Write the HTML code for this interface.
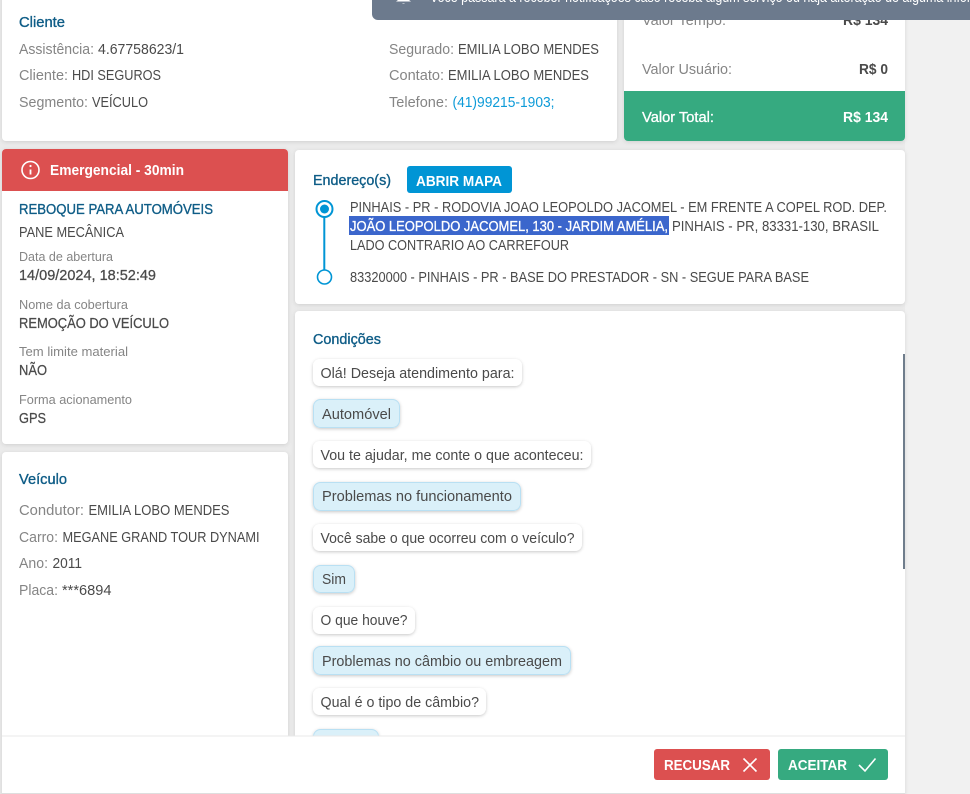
<!DOCTYPE html>
<html lang="pt-BR"><head><meta charset="utf-8"><title>Serviço</title>
<style>
html,body{margin:0;padding:0;width:970px;height:794px;overflow:hidden;background:#f0f0f0}
svg{display:block}
text{font-family:"Liberation Sans",sans-serif;font-size:14.5px;fill:#4a4a4a;white-space:pre}
.l{fill:#858585}
.h{fill:#0f5d87;stroke:#0f5d87;stroke-width:.35}
.s{font-size:13px;fill:#858585}
.m{stroke:#4a4a4a;stroke-width:.25}
.b{font-weight:bold}
.w{fill:#fff}
.wm{fill:#fff;stroke:#fff;stroke-width:.3}
.card{fill:#fff;filter:url(#sh)}
.bub{fill:#fff;filter:url(#sb)}
.sel{fill:#daf0f9;stroke:#b9e0f3;stroke-width:1;filter:url(#sb)}
</style></head><body>
<svg width="970" height="794" viewBox="0 0 970 794" xmlns="http://www.w3.org/2000/svg">
<defs>
<filter id="sh" x="-5%" y="-5%" width="110%" height="110%"><feDropShadow dx="0" dy="1" stdDeviation="2" flood-color="#000" flood-opacity=".12"/></filter>
<filter id="sb" x="-10%" y="-20%" width="120%" height="150%"><feDropShadow dx="0" dy="1" stdDeviation="1.5" flood-color="#000" flood-opacity=".22"/></filter>
</defs>
<rect x="0" y="0" width="905" height="794" fill="#ebebeb"/>
<rect x="905" y="0" width="65" height="794" fill="#f1f1f1"/>

<!-- Cliente -->
<rect class="card" x="2" y="-10" width="615" height="151" rx="4"/>
<text class="h" x="19" y="27" textLength="46" lengthAdjust="spacingAndGlyphs">Cliente</text>
<text class="l" x="19" y="54" textLength="75" lengthAdjust="spacingAndGlyphs">Assistência:</text>
<text x="98" y="54" textLength="86" lengthAdjust="spacingAndGlyphs">4.67758623/1</text>
<text class="l" x="19" y="80" textLength="49" lengthAdjust="spacingAndGlyphs">Cliente:</text>
<text x="72" y="80" textLength="89" lengthAdjust="spacingAndGlyphs">HDI SEGUROS</text>
<text class="l" x="19" y="107" textLength="69" lengthAdjust="spacingAndGlyphs">Segmento:</text>
<text x="92" y="107" textLength="56" lengthAdjust="spacingAndGlyphs">VEÍCULO</text>
<text class="l" x="389" y="54" textLength="65" lengthAdjust="spacingAndGlyphs">Segurado:</text>
<text x="458" y="54" textLength="141" lengthAdjust="spacingAndGlyphs">EMILIA LOBO MENDES</text>
<text class="l" x="389" y="80" textLength="55" lengthAdjust="spacingAndGlyphs">Contato:</text>
<text x="448" y="80" textLength="141" lengthAdjust="spacingAndGlyphs">EMILIA LOBO MENDES</text>
<text class="l" x="389" y="107" textLength="59" lengthAdjust="spacingAndGlyphs">Telefone:</text>
<text x="452.500" y="107" textLength="102" lengthAdjust="spacingAndGlyphs" style="fill:#0e9bd8">(41)99215-1903;</text>

<!-- Valores -->
<rect class="card" x="624" y="-10" width="281" height="151" rx="4"/>
<path d="M624 91H905V137a4 4 0 0 1-4 4H628a4 4 0 0 1-4-4Z" fill="#36aa80"/>
<text class="l" x="642" y="25" textLength="84" lengthAdjust="spacingAndGlyphs">Valor Tempo:</text>
<text class="b" x="843" y="25" textLength="45" lengthAdjust="spacingAndGlyphs">R$ 134</text>
<text class="l" x="642" y="74" textLength="90" lengthAdjust="spacingAndGlyphs">Valor Usuário:</text>
<text class="b" x="859" y="74" textLength="29" lengthAdjust="spacingAndGlyphs">R$ 0</text>
<text class="wm" x="642" y="122" textLength="72" lengthAdjust="spacingAndGlyphs">Valor Total:</text>
<text class="b w" x="843" y="122" textLength="45" lengthAdjust="spacingAndGlyphs">R$ 134</text>

<!-- Banner -->
<path d="M372 0H970V20H378a6 6 0 0 1-6-6Z" fill="#6c7a8d"/>
<path d="M396 1.500H411L409 0H398ZM402 3.500a2 1.500 0 0 0 3 0Z" fill="#fff"/>
<text class="w" x="430" y="2" textLength="541" lengthAdjust="spacingAndGlyphs">Você passará a receber notificações caso receba algum serviço ou haja alteração de alguma infor</text>

<!-- Emergencial -->
<rect class="card" x="2" y="149" width="286" height="295" rx="4"/>
<path d="M2 191V153a4 4 0 0 1 4-4H284a4 4 0 0 1 4 4V191Z" fill="#dc5050"/>
<circle cx="30.500" cy="170" r="8.500" fill="none" stroke="#fff" stroke-width="1.600"/>
<path d="M30.500 169.500V174.500" stroke="#fff" stroke-width="1.800"/>
<circle cx="30.500" cy="166" r="1.100" fill="#fff"/>
<text class="b w" x="50" y="175" textLength="134" lengthAdjust="spacingAndGlyphs">Emergencial - 30min</text>
<text class="h" x="19" y="214" textLength="194" lengthAdjust="spacingAndGlyphs">REBOQUE PARA AUTOMÓVEIS</text>
<text x="19" y="237" textLength="105" lengthAdjust="spacingAndGlyphs">PANE MECÂNICA</text>
<text class="s" x="19" y="261" textLength="94" lengthAdjust="spacingAndGlyphs">Data de abertura</text>
<text class="m" x="19" y="280" textLength="137" lengthAdjust="spacingAndGlyphs">14/09/2024, 18:52:49</text>
<text class="s" x="19" y="309" textLength="109" lengthAdjust="spacingAndGlyphs">Nome da cobertura</text>
<text class="m" x="19" y="328" textLength="150" lengthAdjust="spacingAndGlyphs">REMOÇÃO DO VEÍCULO</text>
<text class="s" x="19" y="356" textLength="109" lengthAdjust="spacingAndGlyphs">Tem limite material</text>
<text class="m" x="19" y="375" textLength="28" lengthAdjust="spacingAndGlyphs">NÃO</text>
<text class="s" x="19" y="404" textLength="113" lengthAdjust="spacingAndGlyphs">Forma acionamento</text>
<text class="m" x="19" y="423" textLength="27" lengthAdjust="spacingAndGlyphs">GPS</text>

<!-- Veículo -->
<rect class="card" x="2" y="452" width="286" height="350" rx="4"/>
<text class="h" x="19" y="484" textLength="48" lengthAdjust="spacingAndGlyphs">Veículo</text>
<text class="l" x="19" y="515" textLength="65" lengthAdjust="spacingAndGlyphs">Condutor:</text>
<text x="88.500" y="515" textLength="141" lengthAdjust="spacingAndGlyphs">EMILIA LOBO MENDES</text>
<text class="l" x="19" y="542" textLength="39" lengthAdjust="spacingAndGlyphs">Carro:</text>
<text x="62.500" y="542" textLength="197" lengthAdjust="spacingAndGlyphs">MEGANE GRAND TOUR DYNAMI</text>
<text class="l" x="19" y="568" textLength="29" lengthAdjust="spacingAndGlyphs">Ano:</text>
<text x="52.500" y="568" textLength="29.500" lengthAdjust="spacingAndGlyphs">2011</text>
<text class="l" x="19" y="595" textLength="39" lengthAdjust="spacingAndGlyphs">Placa:</text>
<text x="62" y="595" textLength="49.500" lengthAdjust="spacingAndGlyphs">***6894</text>

<!-- Endereço -->
<rect class="card" x="295" y="150" width="610" height="154" rx="4"/>
<text class="h" x="313" y="185" textLength="78" lengthAdjust="spacingAndGlyphs">Endereço(s)</text>
<rect x="407" y="166" width="105" height="27" rx="3" fill="#0095d5"/>
<text class="b w" x="416" y="186" textLength="86" lengthAdjust="spacingAndGlyphs">ABRIR MAPA</text>
<path d="M324.300 217V270" stroke="#0095d5" stroke-width="2"/>
<circle cx="324.500" cy="209" r="8" fill="#fff" stroke="#0095d5" stroke-width="2"/>
<circle cx="324.500" cy="209" r="4.500" fill="#0095d5"/>
<circle cx="324.500" cy="277" r="7" fill="#fff" stroke="#0095d5" stroke-width="1.600"/>
<text x="350" y="212" textLength="537" lengthAdjust="spacingAndGlyphs">PINHAIS - PR - RODOVIA JOAO LEOPOLDO JACOMEL - EM FRENTE A COPEL ROD. DEP.</text>
<rect x="349" y="216" width="320" height="19" fill="#3b66cc"/>
<text class="wm" x="350" y="231" textLength="318" lengthAdjust="spacingAndGlyphs">JOÃO LEOPOLDO JACOMEL, 130 - JARDIM AMÉLIA,</text>
<text x="672" y="231" textLength="207" lengthAdjust="spacingAndGlyphs">PINHAIS - PR, 83331-130, BRASIL</text>
<text x="350" y="250" textLength="219" lengthAdjust="spacingAndGlyphs">LADO CONTRARIO AO CARREFOUR</text>
<text x="350" y="282" textLength="459" lengthAdjust="spacingAndGlyphs">83320000 - PINHAIS - PR - BASE DO PRESTADOR - SN - SEGUE PARA BASE</text>

<!-- Condições -->
<rect class="card" x="295" y="311" width="610" height="490" rx="4"/>
<text class="h" x="313" y="344" textLength="68" lengthAdjust="spacingAndGlyphs">Condições</text>

<rect class="bub" x="313" y="359" width="209" height="27" rx="7"/>
<text x="320.500" y="378" textLength="194" lengthAdjust="spacingAndGlyphs">Olá! Deseja atendimento para:</text>
<rect class="sel" x="313.500" y="399.500" width="86" height="28" rx="7"/>
<text x="322" y="419" textLength="69" lengthAdjust="spacingAndGlyphs">Automóvel</text>
<rect class="bub" x="313" y="441" width="278" height="27" rx="7"/>
<text x="320.500" y="460" textLength="263" lengthAdjust="spacingAndGlyphs">Vou te ajudar, me conte o que aconteceu:</text>
<rect class="sel" x="313.500" y="482.500" width="207" height="28" rx="7"/>
<text x="322" y="501" textLength="190" lengthAdjust="spacingAndGlyphs">Problemas no funcionamento</text>
<rect class="bub" x="313" y="524" width="269" height="27" rx="7"/>
<text x="320.500" y="543" textLength="254" lengthAdjust="spacingAndGlyphs">Você sabe o que ocorreu com o veículo?</text>
<rect class="sel" x="313.500" y="565.500" width="41" height="27" rx="7"/>
<text x="322" y="584" textLength="24" lengthAdjust="spacingAndGlyphs">Sim</text>
<rect class="bub" x="313" y="607" width="102" height="27" rx="7"/>
<text x="320.500" y="625" textLength="87" lengthAdjust="spacingAndGlyphs">O que houve?</text>
<rect class="sel" x="313.500" y="646.500" width="257" height="28" rx="7"/>
<text x="322" y="666" textLength="240" lengthAdjust="spacingAndGlyphs">Problemas no câmbio ou embreagem</text>
<rect class="bub" x="313" y="688" width="173" height="27" rx="7"/>
<text x="320.500" y="707" textLength="158.500" lengthAdjust="spacingAndGlyphs">Qual é o tipo de câmbio?</text>
<rect class="sel" x="313.500" y="729.500" width="65" height="28" rx="7"/>

<rect x="903" y="354" width="2" height="215" fill="#6f7d8c"/>

<!-- Footer -->
<rect x="2" y="736" width="903" height="57" fill="#fff"/>
<rect x="2" y="735.500" width="903" height="1" fill="#e9e9e9"/>
<rect x="2" y="793" width="903" height="1" fill="#dedede"/>
<rect x="654" y="749" width="116" height="31" rx="3" fill="#dc5050"/>
<text class="b w" x="664" y="770" textLength="66" lengthAdjust="spacingAndGlyphs">RECUSAR</text>
<path d="M743.500 758.500L756.500 771.500M756.500 758.500L743.500 771.500" stroke="#fff" stroke-width="1.600" fill="none"/>
<rect x="778" y="749" width="110" height="31" rx="3" fill="#36aa80"/>
<text class="b w" x="788" y="770" textLength="59" lengthAdjust="spacingAndGlyphs">ACEITAR</text>
<path d="M859 765L865 771L875.500 758.500" stroke="#fff" stroke-width="1.600" fill="none"/>
</svg>
</body></html>
